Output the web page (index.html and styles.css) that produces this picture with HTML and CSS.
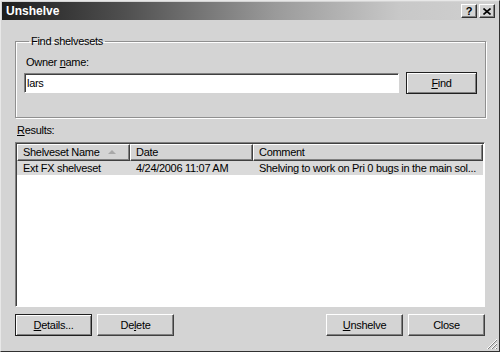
FILE: index.html
```html
<!DOCTYPE html>
<html lang="en">
<head>
    <meta charset="UTF-8">
    <title>Unshelve</title>
    <link rel="stylesheet" href="styles.css">
</head>
<body>
<div class="window">
    <div class="titlebar">
        <span class="title">Unshelve</span>
        <div class="caption-btns">
            <span class="cap">?</span>
            <span class="cap">
                <svg width="8" height="7" viewBox="0 0 8 7"><path d="M0.5 0.5 L7.5 6.5 M7.5 0.5 L0.5 6.5" stroke="#000" stroke-width="1.6"/></svg>
            </span>
        </div>
    </div>
    <div class="content">
        <fieldset class="group">
            <legend>Find shelvesets</legend>
            <div class="label">Owner <u>n</u>ame:</div>
            <div class="find-row">
                <div class="textbox">lars</div>
                <button class="btn default find"><u>F</u>ind</button>
            </div>
        </fieldset>

        <div class="label results-label"><u>R</u>esults:</div>
        <div class="list">
            <div class="list-head">
                <div class="col c1">Shelveset Name <span class="sort"></span></div>
                <div class="col c2">Date</div>
                <div class="col c3">Comment</div>
            </div>
            <div class="row selected">
                <div class="cell c1">Ext FX shelveset</div>
                <div class="cell c2">4/24/2006 11:07 AM</div>
                <div class="cell c3">Shelving to work on Pri 0 bugs in the main sol...</div>
            </div>
        </div>

        <div class="bottom">
            <div class="btn-group">
                <button class="btn default"><u>D</u>etails...</button>
                <button class="btn">De<u>l</u>ete</button>
            </div>
            <div class="btn-group">
                <button class="btn"><u>U</u>nshelve</button>
                <button class="btn">Close</button>
            </div>
        </div>
    </div>
    <svg class="grip" width="12" height="12" viewBox="0 0 12 12">
        <path d="M11 1 L1 11 M11 5 L5 11 M11 9 L9 11" stroke="#fff" stroke-width="1"/>
        <path d="M11 2 L2 11 M11 6 L6 11 M11 10 L10 11" stroke="#808080" stroke-width="1"/>
    </svg>
</div>
</body>
</html>
```

FILE: styles.css
```css
body {
    margin: 0;
    background: #d4d4d4;
    font-family: "Liberation Sans", Arial, sans-serif;
    font-size: 11px;
    letter-spacing: -0.3px;
    color: #000;
}

.window {
    position: relative;
    width: 500px;
    height: 352px;
    box-sizing: border-box;
    border: 1px solid;
    border-color: #e8e8e8 #303030 #303030 #e8e8e8;
    padding: 1px;
    background: #d4d4d4;
}

.titlebar {
    height: 18px;
    display: flex;
    align-items: center;
    justify-content: space-between;
    padding: 0 3px 0 3px;
    background: linear-gradient(to right, #1e1e1e 0%, #505050 25%, #9a9a9a 55%, #c8c8c8 80%, #d0d0d0 100%);
}

.title {
    color: #fff;
    font-weight: bold;
    font-size: 12px;
    letter-spacing: 0;
    margin-left: 1px;
}

.caption-btns {
    display: flex;
    gap: 2px;
}

.cap {
    width: 16px;
    height: 14px;
    box-sizing: border-box;
    display: flex;
    align-items: center;
    justify-content: center;
    background: #d4d4d4;
    border: 1px solid;
    border-color: #fff #303030 #303030 #fff;
    box-shadow: inset -1px -1px 0 #808080;
    font-weight: bold;
    font-size: 11px;
    letter-spacing: 0;
}

.content {
    padding: 15px 13px 0 13px;
}

.group {
    margin: 0;
    width: 467px;
    height: 83px;
    box-sizing: border-box;
    border: 1px solid #909090;
    box-shadow: inset 1px 1px 0 #fff, 1px 1px 0 #fff;
    padding: 0 8px 0 8px;
}

.group legend {
    padding: 0 2px;
    margin-left: 5px;
    line-height: 13px;
}

.label {
    line-height: 13px;
}

.group .label {
    margin: 8px 0 0 2px;
}

.find-row {
    display: flex;
    align-items: center;
    gap: 7px;
    margin-top: 3px;
}

.textbox {
    width: 375px;
    height: 20px;
    box-sizing: border-box;
    background: #fff;
    border: 1px solid;
    border-color: #808080 #fff #fff #808080;
    box-shadow: inset 1px 1px 0 #404040;
    padding: 3px 0 0 2px;
    line-height: 13px;
}

.btn {
    width: 77px;
    height: 22px;
    box-sizing: border-box;
    background: #d4d4d4;
    border: 1px solid;
    border-color: #fff #404040 #404040 #fff;
    box-shadow: inset -1px -1px 0 #808080;
    font-family: inherit;
    font-size: 11px;
    letter-spacing: -0.3px;
    color: #000;
    padding: 0;
}

.btn.default {
    border-color: #202020;
    box-shadow: inset 1px 1px 0 #fff, inset -1px -1px 0 #808080;
}

.btn.find {
    width: 71px;
}

.results-label {
    margin: 6px 0 0 2px;
}

.list {
    margin-top: 5px;
    width: 470px;
    height: 165px;
    box-sizing: border-box;
    background: #fff;
    border: 1px solid;
    border-color: #808080 #fff #fff #808080;
    box-shadow: inset 1px 1px 0 #404040;
    padding: 1px 0 0 1px;
}

.list-head {
    display: flex;
    height: 17px;
    margin-right: 1px;
}

.col {
    box-sizing: border-box;
    background: #d4d4d4;
    border: 1px solid;
    border-color: #fff #404040 #404040 #fff;
    box-shadow: inset -1px -1px 0 #808080;
    padding: 1px 0 0 5px;
    line-height: 13px;
    position: relative;
}

.c1 { width: 113px; }
.c2 { width: 123px; }
.c3 { flex: 1; }

.sort {
    position: absolute;
    right: 13px;
    top: 5px;
    width: 0;
    height: 0;
    border-left: 4px solid transparent;
    border-right: 4px solid transparent;
    border-bottom: 4px solid #a8a8a8;
}

.row {
    display: flex;
    height: 14px;
    line-height: 14px;
    margin-right: 1px;
}

.row.selected {
    background: #dadada;
}

.cell {
    box-sizing: border-box;
    padding-left: 6px;
    white-space: nowrap;
    overflow: hidden;
}

.bottom {
    display: flex;
    justify-content: space-between;
    margin-top: 7px;
    width: 470px;
}

.btn-group {
    display: flex;
    gap: 5px;
}

.grip {
    position: absolute;
    right: 1px;
    bottom: 1px;
}
```
